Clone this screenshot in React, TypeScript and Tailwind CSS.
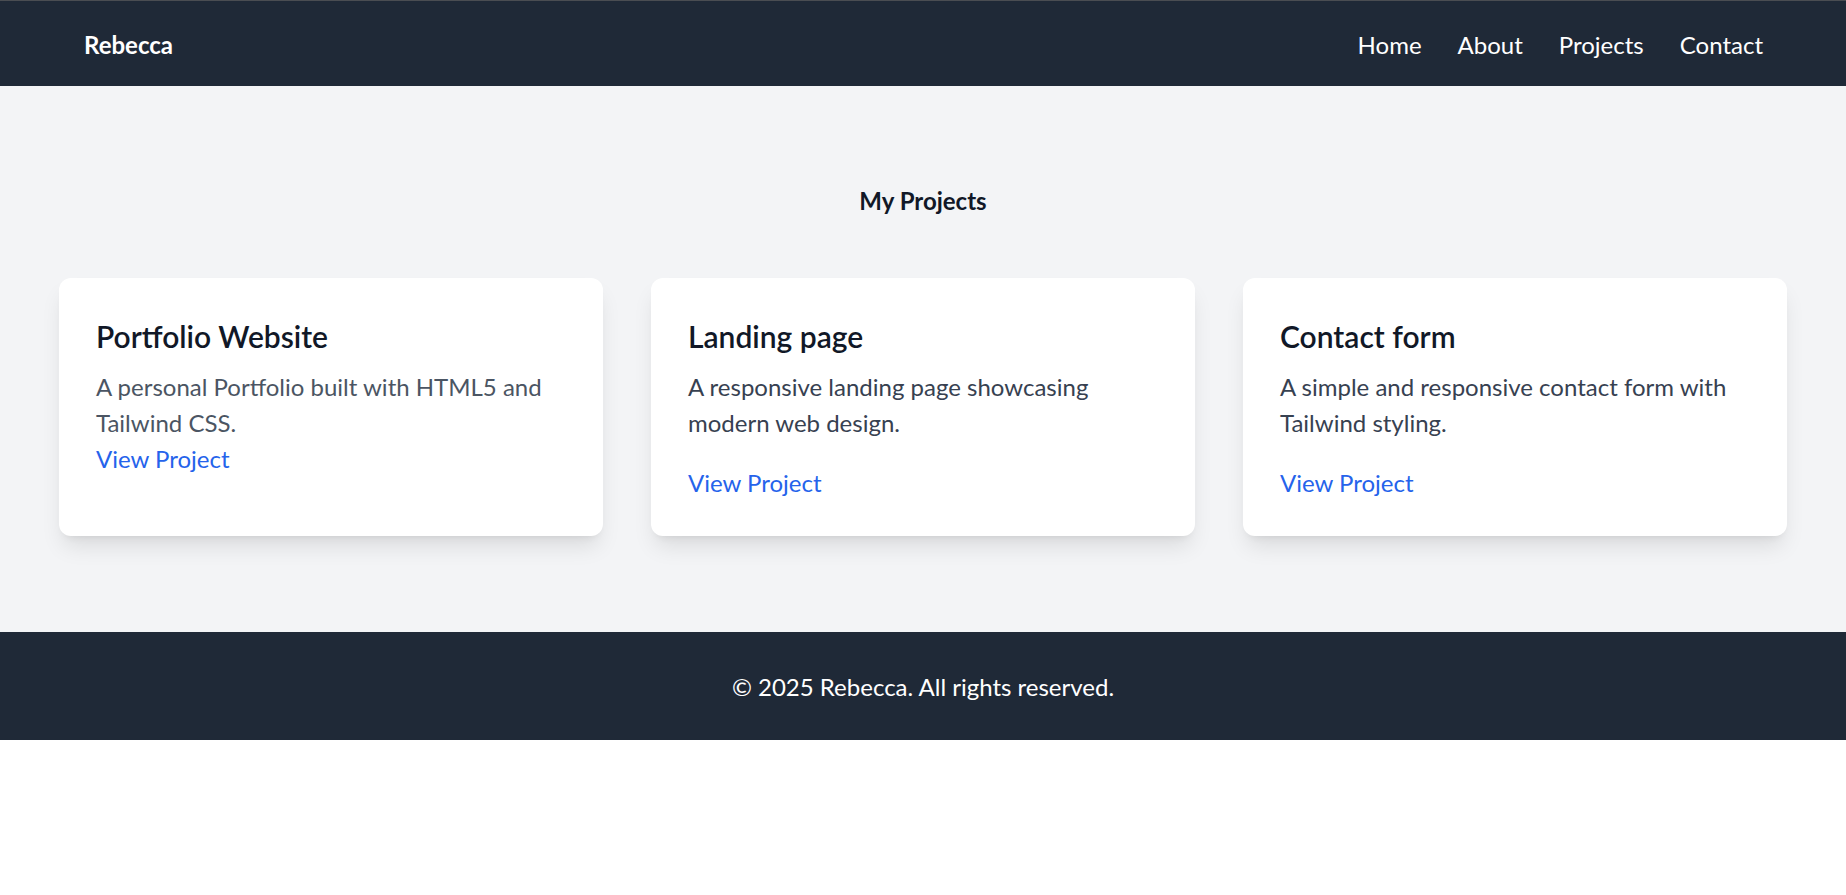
import React from "react";

const projects = [
  {
    title: "Portfolio Website",
    desc: "A personal Portfolio built with HTML5 and Tailwind CSS.",
    descClass: "text-[#4b5563]",
    linkClass: "",
  },
  {
    title: "Landing page",
    desc: "A responsive landing page showcasing modern web design.",
    descClass: "text-[#374151]",
    linkClass: "mt-6",
  },
  {
    title: "Contact form",
    desc: "A simple and responsive contact form with Tailwind styling.",
    descClass: "text-[#374151]",
    linkClass: "mt-6",
  },
];

export default function App() {
  return (
    <div
      className="w-full bg-white"
      style={{ fontFamily: '"Lato", "Open Sans", "Liberation Sans", sans-serif' }}
    >
      <header className="h-[86px] border-t border-[#4a4d52] bg-[#1f2937]">
        <div className="mx-auto flex h-full max-w-[1728px] items-center justify-between pl-[25px] pr-6 pt-[3px]">
          <span className="text-[24px] font-bold leading-9 text-white">Rebecca</span>
          <nav className="flex items-center gap-9 text-[24px] leading-9 text-white">
            <a href="#">Home</a>
            <a href="#">About</a>
            <a href="#">Projects</a>
            <a href="#">Contact</a>
          </nav>
        </div>
      </header>

      <section className="bg-[#f3f4f6] pb-24 pt-[97px]">
        <h2 className="mb-[59px] text-center text-[24px] font-bold leading-9 text-[#111827]">
          My Projects
        </h2>
        <div className="mx-auto grid max-w-[1728px] grid-cols-3 gap-12">
          {projects.map((p) => (
            <div
              key={p.title}
              className="rounded-xl bg-white px-9 pb-[35px] pt-[37px] shadow-[0_14px_22px_-4px_rgba(0,0,0,0.1),0_6px_9px_-6px_rgba(0,0,0,0.1)]"
            >
              <h3 className="mb-3 pl-px text-[30px] font-semibold leading-[42px] text-[#111827]">
                {p.title}
              </h3>
              <p className={`pl-px text-[24px] leading-9 ${p.descClass}`}>{p.desc}</p>
              <a
                href="#"
                className={`inline-block pl-px text-[24px] leading-9 text-[#2563eb] ${p.linkClass}`}
              >
                View Project
              </a>
            </div>
          ))}
        </div>
      </section>

      <footer className="bg-[#1f2937] pb-[35px] pt-[37px] text-center text-[24px] leading-9 text-white">
        © 2025 Rebecca. All rights reserved.
      </footer>
    </div>
  );
}
